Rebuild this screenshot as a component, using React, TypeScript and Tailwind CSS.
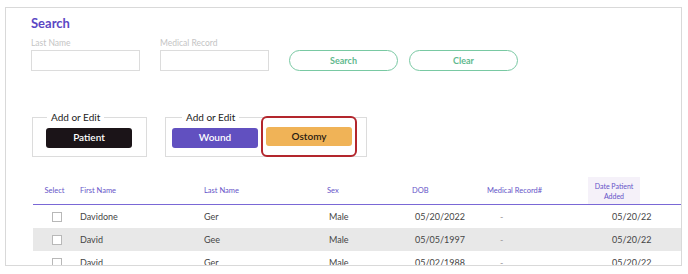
import { Fragment } from "react";

const rows = [
  { first: "Davidone", last: "Ger", sex: "Male", dob: "05/20/2022", mrn: "-", added: "05/20/22", shade: false },
  { first: "David", last: "Gee", sex: "Male", dob: "05/05/1997", mrn: "-", added: "05/20/22", shade: true },
  { first: "David", last: "Ger", sex: "Male", dob: "05/02/1988", mrn: "-", added: "05/20/22", shade: false },
];

function Field({ label }: { label: string }) {
  return (
    <div className="flex flex-col w-[109px]">
      <span className="text-[8.5px] leading-[10px] text-[#c4c4c4]">{label}</span>
      <div className="mt-[2px] h-[21px] border border-[#dcdcdc] bg-white" />
    </div>
  );
}

function OutlineButton({ children }: { children: string }) {
  return (
    <button className="w-[109px] h-[21px] rounded-full border border-[#79c9a3] text-[#5fb98e] text-[9px] font-bold">
      {children}
    </button>
  );
}

export default function App() {
  return (
    <div className="w-[688px] h-[274px] bg-white pt-[7px] pl-[5px] font-['Lato','Open_Sans',sans-serif]">
      <div className="w-[677px] h-[259px] border border-[#d9d9d9] overflow-hidden">
        <div className="pl-[25px] pt-[6px]">
          <h1 className="text-[13px] leading-[18px] font-bold text-[#5b47c4]">Search</h1>
          <div className="flex items-end gap-[20px] mt-[6px]">
            <Field label="Last Name" />
            <Field label="Medical Record" />
            <div className="flex gap-[11px]">
              <OutlineButton>Search</OutlineButton>
              <OutlineButton>Clear</OutlineButton>
            </div>
          </div>
        </div>

        <div className="flex gap-[18px] pl-[26px] mt-[46px]">
          <fieldset className="w-[115px] h-[46px] border border-[#dcdcdc] -mt-[6px] pl-[13px] pr-[14px]">
            <legend className="px-[4px] ml-[1px] text-[10px] leading-[12px] text-[#222]">Add or Edit</legend>
            <button className="mt-[2px] w-[86px] h-[20px] rounded-[3px] bg-[#1b1418] text-white text-[10px] font-semibold">
              Patient
            </button>
          </fieldset>
          <fieldset className="w-[202px] h-[46px] border border-[#dcdcdc] -mt-[6px] pl-[6px]">
            <legend className="px-[4px] ml-[10px] text-[10px] leading-[12px] text-[#222]">Add or Edit</legend>
            <div className="flex items-center -mt-[7px]">
              <button className="mt-[2px] w-[86px] h-[20px] rounded-[3px] bg-[#6150c0] text-white text-[10px] font-semibold">
                Wound
              </button>
              <div className="ml-[3px] w-[96px] h-[41px] rounded-[6px] border-2 border-[#b3262d] flex items-center justify-center">
                <button className="w-[86px] h-[19px] rounded-[3px] bg-[#f0b357] text-[#2a2012] text-[10px] font-semibold">
                  Ostomy
                </button>
              </div>
            </div>
          </fieldset>
        </div>

        <div className="ml-[27px] mt-[20px] text-[9px]">
          <div className="grid grid-cols-[47px_124px_123px_85px_75px_101px_52px_1fr] items-center h-[28px] border-b-[1.5px] border-[#7a68d6] text-[7.5px] text-[#6654c8]">
            <span className="text-center pr-[4px]">Select</span>
            <span>First Name</span>
            <span>Last Name</span>
            <span>Sex</span>
            <span>DOB</span>
            <span>Medical Record#</span>
            <span className="h-full flex items-center justify-center text-center leading-[10px] bg-[#f5f1f9] text-[7px]">
              Date Patient
              <br />
              Added
            </span>
            <span />
          </div>
          {rows.map((r, i) => (
            <Fragment key={i}>
              <div
                className={`grid grid-cols-[47px_124px_123px_85px_75px_101px_52px_1fr] items-center h-[23px] text-[#454545] ${
                  r.shade ? "bg-[#e8e8e8]" : "bg-white"
                }`}
              >
                <span className="flex justify-center">
                  <span className="w-[10px] h-[10px] border border-[#b8b8b8] bg-white" />
                </span>
                <span>{r.first}</span>
                <span>{r.last}</span>
                <span className="pl-[2px]">{r.sex}</span>
                <span className="pl-[3px]">{r.dob}</span>
                <span className="pl-[13px] text-[#999]">{r.mrn}</span>
                <span className="pl-[24px] whitespace-nowrap">{r.added}</span>
                <span />
              </div>
            </Fragment>
          ))}
        </div>
      </div>
    </div>
  );
}
